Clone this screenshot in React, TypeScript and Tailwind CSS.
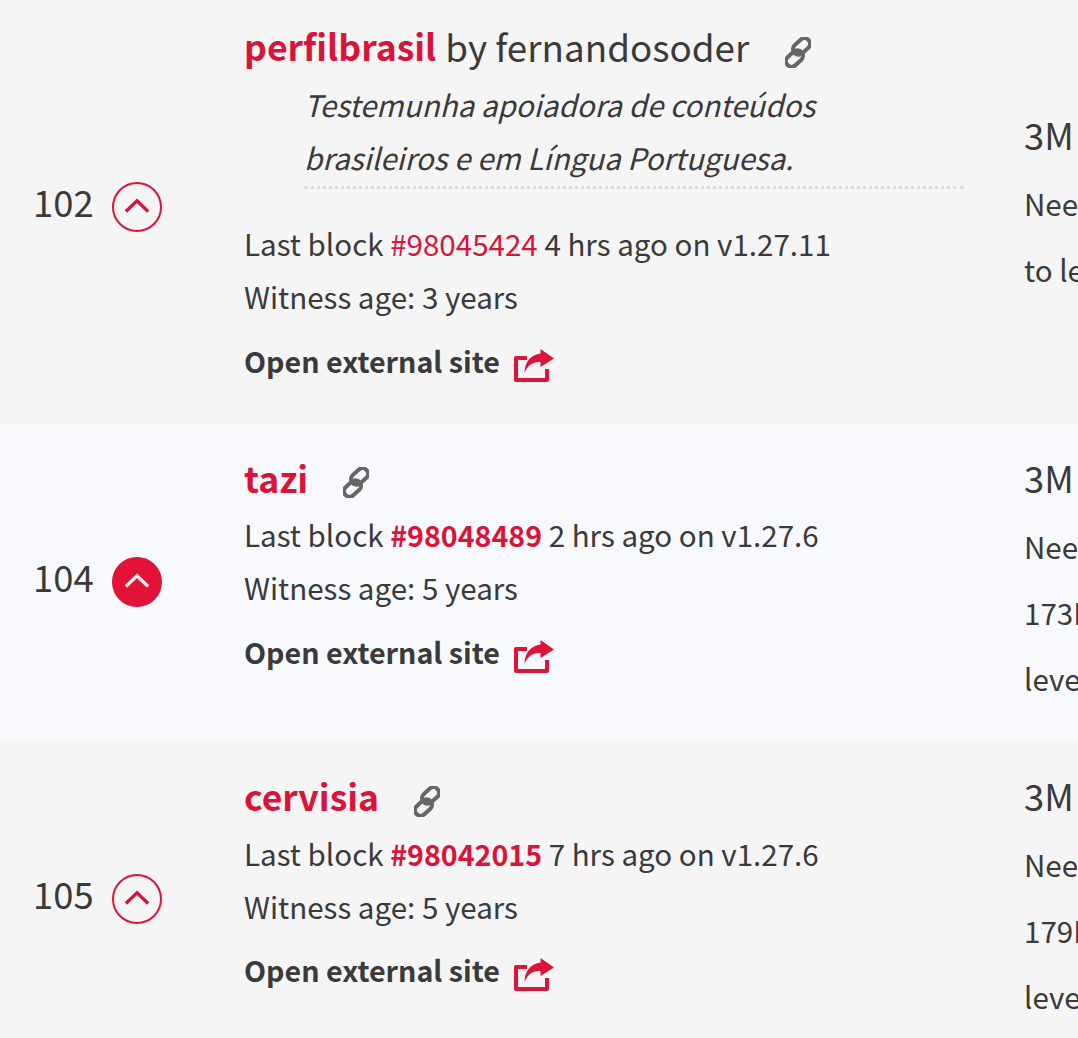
import React from "react";

const witnesses = [
    {
        rank: 102,
        name: "perfilbrasil",
        owner: "by fernandosoder",
        quote: ["Testemunha apoiadora de conteúdos", "brasileiros e em Língua Portuguesa."],
        block: "#98045424",
        boldBlock: false,
        ago: "4 hrs ago on v1.27.11",
        age: "3 years",
        voted: false,
        side: ["Need", "to level up"],
    },
    { rank: 104, name: "tazi", block: "#98048489", boldBlock: true, ago: "2 hrs ago on v1.27.6", age: "5 years", voted: true, side: ["Need", "173M", "level up"] },
    { rank: 105, name: "cervisia", block: "#98042015", boldBlock: true, ago: "7 hrs ago on v1.27.6", age: "5 years", voted: false, side: ["Need", "179M", "level up"] },
];

function VoteButton({ voted }: { voted: boolean }) {
    return (
        <span className={`ml-[18px] flex h-[50px] w-[50px] items-center justify-center rounded-full border-2 border-[#dc143a] ${voted ? "bg-[#e31337] text-[#fdeef1]" : "text-[#d0183c]"}`}>
            <svg viewBox="0 0 28 16" className="mt-[-3px] h-[15px] w-[26px]" fill="none" stroke="currentColor" strokeWidth="3.6">
                <path d="M2 14.5 14 3l12 11.5" />
            </svg>
        </span>
    );
}

function ChainIcon() {
    return (
        <svg viewBox="0 0 26 31" className="h-[31px] w-[26px] text-[#666]" fill="none" stroke="currentColor" strokeWidth="4">
            <rect x="-9.5" y="-5.6" width="19" height="11.2" rx="5.6" transform="translate(16.5 9.5) rotate(-42)" />
            <rect x="-9.5" y="-5.6" width="19" height="11.2" rx="5.6" transform="translate(9.5 21.5) rotate(-42)" />
            <circle cx="13" cy="15.5" r="1.5" fill="currentColor" stroke="none" />
        </svg>
    );
}

function ShareIcon() {
    return (
        <svg viewBox="0 0 40 33" className="ml-[14px] mt-[10px] h-[33px] w-[40px] text-[#dc143a]" fill="none">
            <path d="M13 9H2V31H33V20" stroke="currentColor" strokeWidth="4" strokeLinejoin="round" />
            <path d="M26.5 0 40 9.5 26.5 18V13C19 13 14 15.5 10.5 24 10.5 13 17 5.5 26.5 4.5Z" fill="currentColor" />
        </svg>
    );
}

export default function App() {
    return (
        <div className="h-[1038px] w-[1078px] overflow-hidden text-[#3a3a3a] [font-family:'Noto_Sans_CJK_SC',sans-serif]">
            {witnesses.map((w, i) => (
                <div key={w.rank} className={`flex items-stretch ${i === 1 ? "h-[317px] bg-[#f8f9fd]" : i === 0 ? "h-[423px] bg-[#f5f5f5]" : "h-[317px] bg-[#f5f5f5]"}`}>
                    <div className={`flex w-[244px] shrink-0 items-center pl-[33px] text-[36.4px] leading-none ${i === 0 ? "pb-[10px]" : ""}`}>
                        <span className="mb-[10px]">{w.rank}</span>
                        <VoteButton voted={w.voted} />
                    </div>
                    <div className={`w-[780px] shrink-0 text-[29.55px] leading-[53px] ${i === 0 ? "pt-[15px]" : i === 1 ? "pt-[24px]" : "pt-[25px]"}`}>
                        <div className={`flex items-center text-[36.8px] leading-[54px] ${i === 2 ? "h-[62px]" : "h-[61px]"}`}>
                            <span className="text-[35.6px] font-bold text-[#d9143a]">{w.name}</span>
                            {w.owner && <span className="ml-[9px]">{w.owner}</span>}
                            <span className={w.owner ? "ml-[36px] mt-[14px]" : "ml-[35px] mt-[10px]"}>
                                <ChainIcon />
                            </span>
                        </div>
                        {w.quote && (
                            <div className="mb-[28px] ml-[60px] mt-[2px] w-[660px] border-b-[3px] border-dotted border-[#ddd] pb-[2px] italic">
                                {w.quote[0]}
                                <br />
                                {w.quote[1]}
                            </div>
                        )}
                        <div>
                            Last block <span className={`text-[#d9143a] ${w.boldBlock ? "text-[28.6px] font-bold" : ""}`}>{w.block}</span> {w.ago}
                        </div>
                        <div>Witness age: {w.age}</div>
                        <div className={`flex h-[53px] items-center text-[28.65px] font-bold ${i === 2 ? "mt-[10px]" : "mt-[11px]"}`}>
                            Open external site
                            <ShareIcon />
                        </div>
                    </div>
                    <div className={`flex flex-col justify-center whitespace-nowrap text-[29.55px] leading-[66px] ${i === 0 ? "pb-[23px]" : i === 1 ? "pb-[11px]" : "pb-[9px]"}`}>
                        <div className="text-[36.4px] leading-[74px]">3M</div>
                        {w.side.map((line) => (
                            <div key={line}>{line}</div>
                        ))}
                    </div>
                </div>
            ))}
        </div>
    );
}
